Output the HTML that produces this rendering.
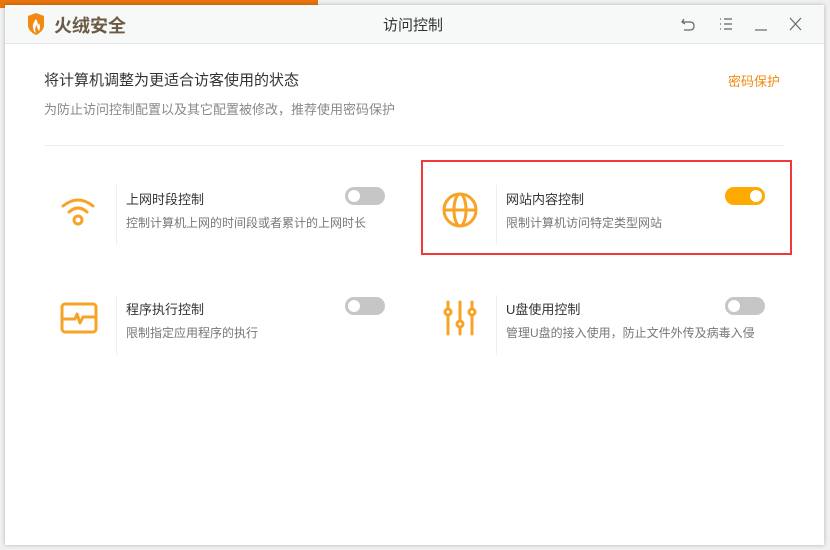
<!DOCTYPE html>
<html><head><meta charset="utf-8"><style>
*{margin:0;padding:0;box-sizing:border-box}
body{width:830px;height:550px;background:#f0f0f0;position:relative;overflow:hidden;font-family:"Liberation Sans","Noto Sans CJK SC",sans-serif}
.bgbar{position:absolute;left:0;top:0;width:318px;height:8px;background:#e8740c}
.win{position:absolute;left:5px;top:5px;width:819px;height:540px;background:#fff;box-shadow:0 0 4px rgba(0,0,0,.25)}
.hdr{position:absolute;left:0;top:0;width:100%;height:39px;background:#f7f8f8;border-bottom:1px solid #e8e8e8}
.abs{position:absolute;white-space:nowrap}
.t{font-size:13px;color:#333}
.d{font-size:12px;color:#777}
.vl{position:absolute;width:1px;height:60px;background:#eee}
.tg{position:absolute;width:40px;height:18px;border-radius:9px;background:#c6c6c6}
.tg::after{content:"";position:absolute;left:3px;top:3px;width:12px;height:12px;border-radius:50%;background:#fff}
.tg.on{background:#ffaa00}
.tg.on::after{left:25px}
</style></head><body>
<div class="bgbar"></div>
<div class="win">
<div class="hdr">
 <svg class="abs" style="left:22px;top:8px" width="18" height="22" viewBox="0 0 18 22"><path d="M1 3 L9 0 L17 3 L17 12 Q17 18 9 22 Q1 18 1 12Z" fill="#f08a12"/><path d="M9 6 Q5 11 6 15 Q7 19 9 20 Q7 15 10 12 Q10 16 12 18 Q14 14 12 10 Q11 12 11 13 Q11 9 9 6Z" fill="#fff"/></svg>
 <div class="abs" style="left:49px;top:7px;font-size:18px;font-weight:bold;color:#6b5a44">火绒安全</div>
 <div class="abs" style="left:378px;top:9px;font-size:15px;color:#333">访问控制</div>
 <svg class="abs" style="left:676px;top:11px" width="140" height="16" viewBox="0 0 140 16" fill="none" stroke="#666" stroke-width="1.2"><path d="M3 3 L1 6 L4 8 M1 6 H9 Q13 6 13 10 Q13 14 9 14 H3"/><path d="M39 3h1M43 3h8M39 8h1M43 8h8M39 13h1M43 13h8"/><path d="M74 14h12"/><path d="M109 2l11 12M120 2l-11 12"/></svg>
</div>
<div class="abs" style="left:39px;top:64px;font-size:15px;color:#333">将计算机调整为更适合访客使用的状态</div>
<div class="abs" style="left:39px;top:94px;font-size:13px;color:#888">为防止访问控制配置以及其它配置被修改，推荐使用密码保护</div>
<div class="abs" style="left:723px;top:66px;font-size:13px;color:#f08a12">密码保护</div>
<div class="abs" style="left:39px;top:140px;width:740px;height:1px;background:#eee"></div>

<svg class="abs" style="left:55px;top:189px" width="36" height="36" viewBox="0 0 36 36" fill="none" stroke="#f7a326" stroke-width="3" stroke-linecap="round"><path d="M3 12 Q18 0 33 12"/><path d="M9 18 Q18 10 27 18"/><circle cx="18" cy="26" r="4"/></svg>
<div class="vl" style="left:111px;top:180px"></div>
<div class="abs t" style="left:121px;top:184px">上网时段控制</div>
<div class="abs d" style="left:121px;top:209px">控制计算机上网的时间段或者累计的上网时长</div>
<div class="tg" style="left:340px;top:182px"></div>

<div class="abs" style="left:416px;top:155px;width:371px;height:95px;border:2px solid #f0393a"></div>
<svg class="abs" style="left:436px;top:186px" width="38" height="38" viewBox="0 0 38 38" fill="none" stroke="#f7a326" stroke-width="3"><circle cx="19" cy="19" r="16"/><ellipse cx="19" cy="19" rx="6" ry="16"/><path d="M3 19h32"/></svg>
<div class="vl" style="left:491px;top:180px"></div>
<div class="abs t" style="left:501px;top:184px">网站内容控制</div>
<div class="abs d" style="left:501px;top:209px">限制计算机访问特定类型网站</div>
<div class="tg on" style="left:720px;top:182px"></div>

<svg class="abs" style="left:55px;top:297px" width="38" height="32" viewBox="0 0 38 32" fill="none" stroke="#f7a326" stroke-width="3" stroke-linejoin="round"><rect x="2" y="2" width="34" height="28" rx="3"/><path d="M2 17h13l2-5 3 9 3-6h13"/></svg>
<div class="vl" style="left:111px;top:290px"></div>
<div class="abs t" style="left:121px;top:294px">程序执行控制</div>
<div class="abs d" style="left:121px;top:319px">限制指定应用程序的执行</div>
<div class="tg" style="left:340px;top:292px"></div>

<svg class="abs" style="left:437px;top:295px" width="36" height="36" viewBox="0 0 36 36" fill="none" stroke="#f7a326" stroke-width="3" stroke-linecap="round"><path d="M6 2v32M18 2v32M30 2v32"/><circle cx="6" cy="12" r="3" fill="#fff"/><circle cx="18" cy="24" r="3" fill="#fff"/><circle cx="30" cy="12" r="3" fill="#fff"/></svg>
<div class="vl" style="left:491px;top:290px"></div>
<div class="abs t" style="left:501px;top:294px">U盘使用控制</div>
<div class="abs d" style="left:501px;top:319px">管理U盘的接入使用，防止文件外传及病毒入侵</div>
<div class="tg" style="left:720px;top:292px"></div>
</div>
</body></html>
